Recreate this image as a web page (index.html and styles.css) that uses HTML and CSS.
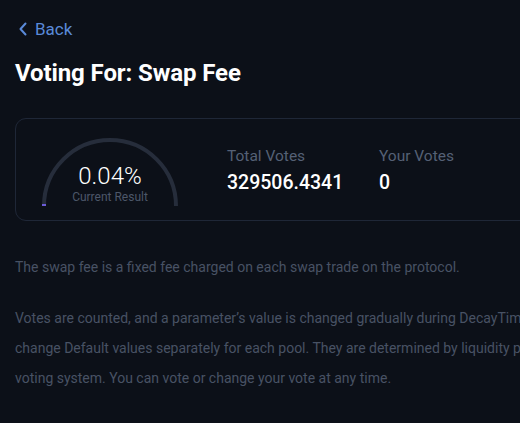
FILE: index.html
```html
<!DOCTYPE html>
<html lang="en">
<head>
<meta charset="utf-8">
<link rel="stylesheet" href="styles.css">
</head>
<body>
<main class="page">
  <a class="back" href="#">
    <svg class="back-icon" width="10" height="14" viewBox="0 0 10 14"><path d="M7.5 1.5 L2.5 7 L7.5 12.5" fill="none" stroke="currentColor" stroke-width="2" stroke-linecap="round" stroke-linejoin="round"/></svg>
    <span>Back</span>
  </a>
  <h1 class="title">Voting For: Swap Fee</h1>

  <section class="card">
    <div class="gauge">
      <svg class="gauge-arc" width="140" height="74" viewBox="0 0 140 74">
        <path d="M4 72 A66 66 0 0 1 136 72" fill="none" stroke="#262d3b" stroke-width="4"/>
        <path d="M4 72 L4 70" fill="none" stroke="#6b5bd6" stroke-width="4"/>
      </svg>
      <div class="gauge-text">
        <div class="gauge-value">0.04%</div>
        <div class="gauge-label">Current Result</div>
      </div>
    </div>
    <div class="stat">
      <div class="stat-label">Total Votes</div>
      <div class="stat-value">329506.4341</div>
    </div>
    <div class="stat">
      <div class="stat-label">Your Votes</div>
      <div class="stat-value">0</div>
    </div>
  </section>

  <p class="desc">The swap fee is a fixed fee charged on each swap trade on the protocol.</p>
  <p class="desc">Votes are counted, and a parameter’s value is changed gradually during DecayTime. Users can<br>change Default values separately for each pool. They are determined by liquidity providers through the<br>voting system. You can vote or change your vote at any time.</p>
</main>
</body>
</html>
```
FILE: styles.css
```css
html, body {
  margin: 0;
  padding: 0;
  background: #0c1018;
  overflow: hidden;
}
body {
  font-family: Roboto, "Liberation Sans", sans-serif;
  color: #fff;
  width: 520px;
  height: 423px;
}
.page {
  width: 760px;
  padding: 19px 0 0 15px;
}
.back {
  display: inline-flex;
  align-items: center;
  gap: 7px;
  color: #5a8ad9;
  text-decoration: none;
  font-size: 17px;
  line-height: 20px;
  padding-left: 3px;
}
.back-icon {
  display: block;
}
.title {
  margin: 18px 0 0;
  font-size: 24px;
  font-weight: 700;
  line-height: 30px;
  letter-spacing: -0.1px;
}
.card {
  margin-top: 30px;
  width: 700px;
  height: 103px;
  border: 1px solid #1f2737;
  border-radius: 11px;
  display: flex;
  align-items: center;
  box-sizing: border-box;
}
.gauge {
  position: relative;
  width: 140px;
  height: 74px;
  margin-left: 24px;
  margin-top: 2px;
}
.gauge-arc {
  display: block;
}
.gauge-text {
  position: absolute;
  left: 0;
  right: 0;
  top: 28px;
  text-align: center;
}
.gauge-value {
  font-size: 24px;
  font-weight: 300;
  line-height: 28px;
}
.gauge-label {
  font-size: 12px;
  color: #4d5769;
  line-height: 14px;
}
.stat {
  margin-left: 47px;
  margin-top: 1px;
  width: 104px;
}
.stat + .stat {
  margin-left: 48px;
}
.stat-label {
  font-size: 15.5px;
  color: #556075;
  line-height: 22px;
}
.stat-value {
  font-size: 19.5px;
  font-weight: 500;
  line-height: 26px;
  margin-top: 3px;
}
.desc {
  margin: 0;
  font-size: 14px;
  line-height: 30px;
  color: #485264;
  white-space: nowrap;
}
.desc:first-of-type {
  margin-top: 31px;
}
.desc + .desc {
  margin-top: 21px;
}
```
